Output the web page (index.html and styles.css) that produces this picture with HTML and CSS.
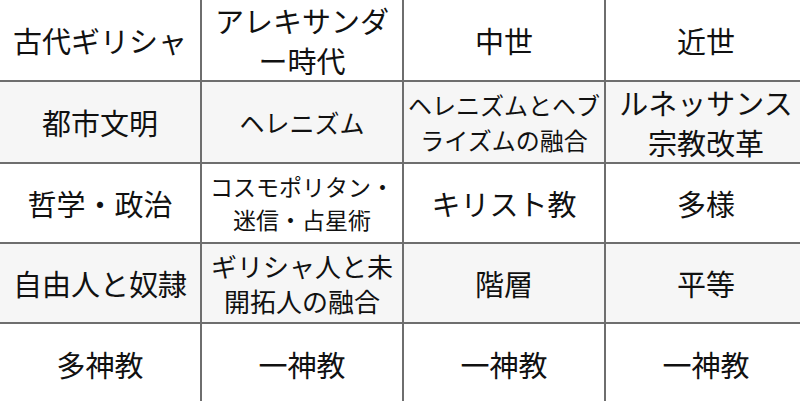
FILE: index.html
```html
<!DOCTYPE html>
<html lang="ja">
<head>
<meta charset="utf-8">
<link rel="stylesheet" href="styles.css">
</head>
<body>
<table class="grid">
  <tr class="row">
    <td class="cell">古代ギリシャ</td>
    <td class="cell s29">アレキサンダ<br>ー時代</td>
    <td class="cell">中世</td>
    <td class="cell">近世</td>
  </tr>
  <tr class="row alt">
    <td class="cell">都市文明</td>
    <td class="cell s25">ヘレニズム</td>
    <td class="cell s24 lh35">ヘレニズムとヘブ<br>ライズムの融合</td>
    <td class="cell lh40">ルネッサンス<br>宗教改革</td>
  </tr>
  <tr class="row">
    <td class="cell">哲学・政治</td>
    <td class="cell s23 lh33">コスモポリタン・<br>迷信・占星術</td>
    <td class="cell">キリスト教</td>
    <td class="cell">多様</td>
  </tr>
  <tr class="row alt">
    <td class="cell">自由人と奴隷</td>
    <td class="cell s26 lh35">ギリシャ人と未<br>開拓人の融合</td>
    <td class="cell">階層</td>
    <td class="cell">平等</td>
  </tr>
  <tr class="row last">
    <td class="cell">多神教</td>
    <td class="cell">一神教</td>
    <td class="cell">一神教</td>
    <td class="cell">一神教</td>
  </tr>
</table>
</body>
</html>
```
FILE: styles.css
```css
html, body {
  margin: 0;
  padding: 0;
  background: #ffffff;
}
.grid {
  width: 800px;
  table-layout: fixed;
  border-collapse: collapse;
  font-family: "Noto Sans CJK JP", "Noto Sans", sans-serif;
  color: #111111;
}
.row {
  height: 80px;
}
.row.last {
  height: 81px;
}
.alt {
  background: #f6f6f6;
}
.cell {
  width: 200px;
  padding: 0;
  text-align: center;
  vertical-align: middle;
  font-size: 29px;
  line-height: 40px;
  border-right: 2px solid #6e6e6e;
  border-bottom: 2px solid #6e6e6e;
  white-space: nowrap;
  overflow: hidden;
}
.cell:last-child {
  border-right: none;
}
.last .cell {
  border-bottom: none;
}
.s29 { font-size: 29px; }
.s26 { font-size: 26px; }
.s25 { font-size: 25px; }
.s24 { font-size: 24px; }
.s23 { font-size: 23px; }
.lh33 { line-height: 33px; }
.lh35 { line-height: 35px; }
.lh40 { line-height: 40px; }
```
